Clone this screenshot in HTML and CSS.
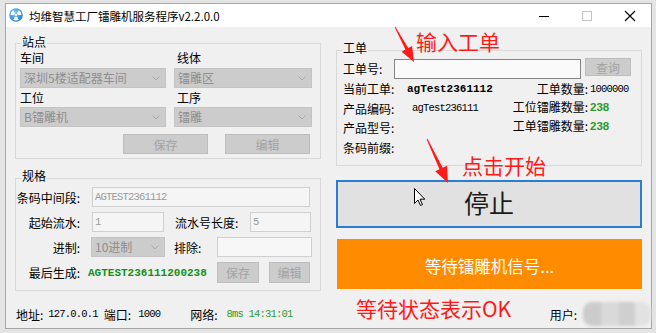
FILE: index.html
```html
<!DOCTYPE html>
<html lang="zh-CN">
<head>
<meta charset="utf-8">
<title>均维智慧工厂镭雕机服务程序</title>
<link rel="stylesheet" href="styles.css">
</head>
<body>
<div class="window">
  <div class="titlebar">
    <svg class="app-icon" viewBox="0 0 14 14" width="14" height="14">
      <defs>
        <radialGradient id="ig" cx="40%" cy="35%" r="70%">
          <stop offset="0" stop-color="#7fd0ff"/>
          <stop offset="1" stop-color="#1a78d0"/>
        </radialGradient>
      </defs>
      <circle cx="7" cy="7" r="6.8" fill="url(#ig)"/>
      <path fill="#fff" d="M1.5,7 A5.5,5.5 0 0 1 4.25,2.237 L6.1,5.441 A1.8,1.8 0 0 0 5.2,7 Z"/>
      <path fill="#fff" d="M9.75,2.237 A5.5,5.5 0 0 1 12.5,7 L8.8,7 A1.8,1.8 0 0 0 7.9,5.441 Z"/>
      <path fill="#fff" d="M9.75,11.763 A5.5,5.5 0 0 1 4.25,11.763 L6.1,8.559 A1.8,1.8 0 0 0 7.9,8.559 Z"/>
      <circle cx="7" cy="7" r="1.1" fill="#fff"/>
    </svg>
    <span class="title">均维智慧工厂镭雕机服务程序v2.2.0.0</span>
    <div class="cbtns">
      <span class="cbtn"><svg width="12" height="10" viewBox="0 0 12 10"><line x1="1" y1="5.5" x2="11" y2="5.5" stroke="#000" stroke-width="1"/></svg></span>
      <span class="cbtn"><svg width="12" height="12" viewBox="0 0 12 12"><rect x="1.5" y="1.5" width="9" height="9" fill="none" stroke="#c4c4c4" stroke-width="1"/></svg></span>
      <span class="cbtn"><svg width="12" height="12" viewBox="0 0 12 12"><path d="M1,1 L11,11 M11,1 L1,11" stroke="#000" stroke-width="1.1" fill="none"/></svg></span>
    </div>
  </div>

  <div class="client">
    <div class="col col-left">
      <div class="group station">
        <span class="caption">站点</span>
        <div class="sgrid">
          <div class="field">
            <div class="lbl">车间</div>
            <div class="combo">深圳5楼适配器车间<svg class="chev" width="8" height="5" viewBox="0 0 8 5"><polyline points="0.5,0.5 4,4 7.5,0.5" fill="none" stroke="#a8a8a8"/></svg></div>
          </div>
          <div class="field">
            <div class="lbl lbl-in">线体</div>
            <div class="combo">镭雕区<svg class="chev" width="8" height="5" viewBox="0 0 8 5"><polyline points="0.5,0.5 4,4 7.5,0.5" fill="none" stroke="#a8a8a8"/></svg></div>
          </div>
          <div class="field field-2">
            <div class="lbl">工位</div>
            <div class="combo">B镭雕机<svg class="chev" width="8" height="5" viewBox="0 0 8 5"><polyline points="0.5,0.5 4,4 7.5,0.5" fill="none" stroke="#a8a8a8"/></svg></div>
          </div>
          <div class="field field-2">
            <div class="lbl lbl-in">工序</div>
            <div class="combo">镭雕<svg class="chev" width="8" height="5" viewBox="0 0 8 5"><polyline points="0.5,0.5 4,4 7.5,0.5" fill="none" stroke="#a8a8a8"/></svg></div>
          </div>
        </div>
        <div class="btnrow">
          <span class="btn btn-wide">保存</span>
          <span class="btn btn-wide">编辑</span>
        </div>
      </div>

      <div class="group spec">
        <span class="caption">规格</span>
        <div class="row">
          <span class="rl">条码中间段:</span>
          <span class="tb tb-code">AGTEST2361112</span>
        </div>
        <div class="row">
          <span class="rl">起始流水:</span>
          <span class="tb tb-start">1</span>
          <span class="ml-label">流水号长度:</span>
          <span class="tb tb-len">5</span>
        </div>
        <div class="row">
          <span class="rl">进制:</span>
          <span class="combo combo-base">10进制<svg class="chev" width="8" height="5" viewBox="0 0 8 5"><polyline points="0.5,0.5 4,4 7.5,0.5" fill="none" stroke="#a8a8a8"/></svg></span>
          <span class="ex-label">排除:</span>
          <span class="tb tb-ex"></span>
        </div>
        <div class="row row-last">
          <span class="rl">最后生成:</span>
          <span class="last-val">AGTEST236111200238</span>
          <span class="btn btn-s1">保存</span>
          <span class="btn btn-s2">编辑</span>
        </div>
      </div>
    </div>

    <div class="col col-right">
      <div class="group order">
        <span class="caption">工单</span>
        <div class="orow">
          <span class="olbl">工单号:</span>
          <span class="tb-order"></span>
          <span class="btn btn-q">查询</span>
        </div>
        <div class="info">
          <div class="ileft">
            <div class="irow"><span class="k">当前工单:</span><span class="v-bold">agTest2361112</span></div>
            <div class="irow"><span class="k">产品编码:</span><span class="v-mono v-shift">agTest236111</span></div>
            <div class="irow"><span class="k">产品型号:</span></div>
            <div class="irow"><span class="k">条码前缀:</span></div>
          </div>
          <div class="iright">
            <span class="rk">工单数量:</span><span class="v-mono">1000000</span>
            <span class="rk">工位镭雕数量:</span><span class="v-green">238</span>
            <span class="rk">工单镭雕数量:</span><span class="v-green">238</span>
          </div>
        </div>
      </div>
      <div class="stop">停止</div>
      <div class="signal">等待镭雕机信号...</div>
    </div>
  </div>

  <div class="status">
    <span>地址:</span><span class="mono s-ip">127.0.0.1</span>
    <span class="s-port">端口:</span><span class="mono s-portv">1000</span>
    <span class="s-net">网络:</span><span class="mono s-netv">8ms 14:31:01</span>
    <span class="s-user">用户:</span><span class="blur"></span>
  </div>
</div>

<svg class="annot" width="656" height="333" viewBox="0 0 656 333">
  <polygon fill="#ff1a1a" points="395.35,26.81 408.25,48.04 412.11,45.94 414,62 401.57,51.66 405.43,49.56 394.65,27.19"/>
  <polygon fill="#ff1a1a" points="427.45,138.78 442.73,167.77 446.97,165.75 448,183 435.23,171.35 439.47,169.33 426.55,139.22"/>
</svg>
<svg class="cursor" width="12" height="19" viewBox="0 0 12 19">
  <path d="M0.5,0.5 L0.5,15.5 L4,12 L6.5,17.5 L8.5,16.6 L6,11.2 L10.8,11.2 Z" fill="#fff" stroke="#000" stroke-width="1" stroke-linejoin="round"/>
</svg>
<div class="note note-1">输入工单</div>
<div class="note note-2">点击开始</div>
<div class="note note-3">等待状态表示OK</div>
</body>
</html>
```

FILE: styles.css
```css
* { box-sizing: border-box; }

body {
  margin: 0;
  width: 656px;
  height: 333px;
  overflow: hidden;
  position: relative;
  background: #e4e4e4;
  font-family: "Noto Sans CJK SC", "Microsoft YaHei", sans-serif;
  font-size: 12px;
  color: #000;
}

.window {
  margin: 3px 0 0 5px;
  width: 647px;
  height: 326px;
  border: 1px solid #a6a6a6;
  background: #f0f0f0;
  display: flex;
  flex-direction: column;
}

/* title bar */
.titlebar {
  flex: none;
  height: 23px;
  background: #fff;
  display: flex;
  align-items: center;
}
.app-icon { margin-left: 3px; margin-top: -2px; flex: none; }
.title { margin-left: 6px; font-size: 11.5px; line-height: 14px; }
.cbtns { margin-left: auto; display: flex; height: 100%; }
.cbtn { width: 43px; display: flex; align-items: center; justify-content: center; }

/* client area */
.client { display: flex; gap: 15px; padding: 0 9px; }
.col { width: 306px; display: flex; flex-direction: column; }
.col-left { padding-top: 16px; }
.col-right { padding-top: 23px; }

.group { position: relative; border: 1px solid #d8d8d8; }
.caption {
  position: absolute;
  top: -9px;
  left: 5px;
  padding: 0 1px;
  line-height: 12px;
  background: #f0f0f0;
}
.station .caption { top: -8px; }

/* station */
.station { padding: 5px 8px 4px 4px; }
.sgrid { display: grid; grid-template-columns: 146px 138px; column-gap: 8px; }
.lbl { height: 16px; line-height: 16px; padding-top: 1px; }
.lbl-in { padding-left: 3px; }
.field .combo { margin-top: 3px; }
.field-2 { margin-top: 1px; }
.field-2 .combo { margin-top: 2px; }

.combo {
  height: 20px;
  display: flex;
  align-items: center;
  justify-content: space-between;
  padding: 0 5px 0 3px;
  background: #cccccc;
  border: 1px solid #c4c4c4;
  color: #8e8e8e;
  line-height: 18px;
  white-space: nowrap;
}
.chev { flex: none; }

.btn {
  height: 20px;
  display: flex;
  align-items: center;
  justify-content: center;
  background: #cccccc;
  border: 1px solid #bdbdbd;
  color: #a3a3a3;
  flex: none;
}
.btnrow { display: flex; justify-content: flex-end; gap: 17px; margin-top: 7px; padding-right: 2px; }
.btn-wide { width: 85px; }

/* spec */
.spec { margin-top: 19px; padding: 8px 0 7px 0; }
.row { display: flex; align-items: center; height: 20px; }
.row + .row { margin-top: 5px; }
.row-last { height: 21px; }
.rl { width: 66px; flex: none; text-align: right; padding-right: 2px; white-space: nowrap; }

.tb {
  height: 20px;
  flex: none;
  border: 1px solid #cfcfcf;
  background: #f5f5f5;
  color: #9a9a9a;
  font-family: "Liberation Mono", monospace;
  font-size: 10.5px;
  letter-spacing: -0.8px;
  line-height: 18px;
  padding-left: 2px;
}
.tb-code { margin-left: 10px; width: 218px; }
.tb-start { margin-left: 10px; width: 72px; }
.ml-label { margin-left: 11px; width: 75px; flex: none; }
.tb-len { width: 61px; }
.combo-base { margin-left: 9px; width: 74px; flex: none; }
.ex-label { margin-left: 9px; width: 43px; flex: none; }
.tb-ex { width: 95px; background: #f7f7f7; }
.last-val {
  margin-left: 6px;
  width: 129px;
  flex: none;
  font-family: "Liberation Mono", monospace;
  font-weight: bold;
  font-size: 11px;
  color: #15901a;
}
.btn-s1 { width: 42px; height: 21px; }
.btn-s2 { width: 41px; height: 21px; margin-left: 10px; }

/* order */
.order { padding: 8px 10px 8px 6px; }
.orow { display: flex; align-items: flex-start; height: 20px; }
.olbl { width: 51px; line-height: 20px; flex: none; }
.tb-order { width: 187px; height: 20px; border: 1px solid #858585; background: #fafafa; flex: none; }
.btn-q { width: 46px; height: 18px; margin-left: 4px; margin-top: -1px; }

.info { display: flex; }
.ileft { flex: 1; }
.irow { height: 19.5px; display: flex; align-items: center; }
.k { width: 64px; flex: none; }
.v-bold {
  font-family: "Liberation Mono", monospace;
  font-weight: bold;
  font-size: 11px;
}
.v-mono {
  font-family: "Liberation Mono", monospace;
  font-size: 10.5px;
  letter-spacing: -0.8px;
}
.v-shift { margin-left: 5px; }
.iright {
  display: grid;
  grid-template-columns: auto 41px;
  grid-template-rows: 19.5px 16px 22px;
  column-gap: 2px;
  align-items: center;
}
.rk { text-align: right; white-space: nowrap; }
.v-green {
  font-family: "Liberation Sans", Arial, sans-serif;
  font-weight: bold;
  font-size: 11.5px;
  color: #2a9a2a;
}

.stop {
  margin-top: 14px;
  height: 48px;
  border: 2px solid #2b7cd3;
  background: #e1e1e1;
  display: flex;
  align-items: center;
  justify-content: center;
  padding-bottom: 4px;
  font-size: 25px;
  color: #1a1a1a;
}
.signal {
  margin-top: 11px;
  margin-left: 1px;
  height: 50px;
  background: #ff8c00;
  color: #fff;
  display: flex;
  align-items: center;
  justify-content: center;
  padding-top: 4px;
  font-size: 16.5px;
}

/* status bar */
.status {
  margin-top: 11px;
  height: 24px;
  display: flex;
  align-items: center;
  padding-left: 10px;
  white-space: nowrap;
}
.mono {
  font-family: "Liberation Mono", monospace;
  font-size: 10.5px;
  letter-spacing: -0.8px;
}
.s-ip { margin-left: 5px; }
.s-port { margin-left: 6px; }
.s-portv { margin-left: 7px; }
.s-net { margin-left: 30px; }
.s-netv { margin-left: 9px; color: #2e9a3a; }
.s-user { margin-left: auto; }
.blur {
  margin-left: 6px;
  width: 68px;
  height: 24px;
  border-radius: 9px;
  background: linear-gradient(90deg, #cbcbcb 0 18px, #d9d9d9 18px 36px, #cfcfcf 36px 52px, #e2e2e2 52px);
  filter: blur(1.5px);
}

/* annotations overlay */
.annot { position: absolute; left: 0; top: 0; pointer-events: none; }
.cursor { position: absolute; left: 414px; top: 188px; }
.note {
  position: absolute;
  color: #ff1a1a;
  font-size: 21px;
  line-height: 21px;
  white-space: nowrap;
}
.note-1 { left: 416px; top: 31px; }
.note-2 { left: 462px; top: 155px; }
.note-3 { left: 356px; top: 298px; }
```
